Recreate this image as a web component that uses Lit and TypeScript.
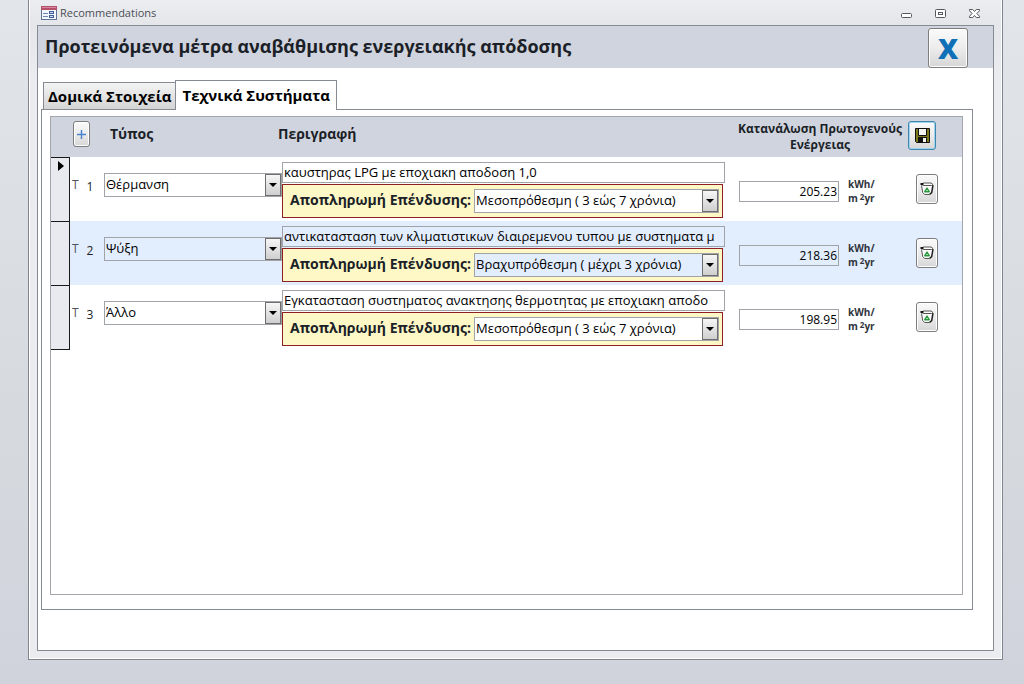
import { LitElement, html, css, svg } from "lit";
import { customElement, state } from "lit/decorators.js";
import { classMap } from "lit/directives/class-map.js";

interface Measure {
  id: number;
  type: string;
  description: string;
  payback: string;
  energy: string;
}

const TYPES = ["Θέρμανση", "Ψύξη", "Άλλο"];
const PAYBACKS = ["Βραχυπρόθεσμη ( μέχρι 3 χρόνια)", "Μεσοπρόθεσμη ( 3 εώς 7 χρόνια)"];

const MEASURES: Measure[] = [
  { id: 1, type: TYPES[0], description: "καυστηρας LPG με εποχιακη αποδοση 1,0", payback: PAYBACKS[1], energy: "205.23" },
  { id: 2, type: TYPES[1], description: "αντικατασταση των κλιματιστικων διαιρεμενου τυπου με συστηματα μ", payback: PAYBACKS[0], energy: "218.36" },
  { id: 3, type: TYPES[2], description: "Εγκατασταση συστηματος ανακτησης θερμοτητας με εποχιακη αποδο", payback: PAYBACKS[1], energy: "198.95" },
];

const formIcon = html`<svg width="16" height="16" viewBox="0 0 16 16" aria-hidden="true">
  <rect x="0.5" y="1.5" width="15" height="13" fill="#f4f7fb" stroke="#5f7394"/>
  <rect x="0" y="1" width="16" height="4" fill="#b5506a"/>
  <rect x="1" y="2" width="14" height="1" fill="#d58a9b"/>
  <path d="M2 8.500h5M2 11.500h5" stroke="#6d86b0"/>
  <rect x="8.5" y="6.5" width="4" height="2" fill="#cfdcf0" stroke="#3f5f94"/>
  <rect x="8.5" y="10.5" width="4" height="2" fill="#cfdcf0" stroke="#3f5f94"/>
</svg>`;

const minimizeIcon = svg`<rect x="1.5" y="6.5" width="10" height="4" rx="1" fill="#fff" stroke="#55585f"/>`;
const restoreIcon = svg`<rect x="1.5" y="2.5" width="10" height="8" rx="1" fill="#fff" stroke="#55585f"/>
  <rect x="4.5" y="5.5" width="4" height="2" fill="#fff" stroke="#55585f"/>`;
const closeIcon = svg`<path d="M1.500 2.500h3.200l1.800 2 1.800-2h3.200v1.200l-2.600 2.800 2.600 2.800v1.200H8.300l-1.800-2-1.800 2H1.500v-1.200l2.600-2.800-2.600-2.800z" fill="#fff" stroke="#55585f"/>`;

const saveIcon = html`<svg width="15" height="15" viewBox="0 0 15 15" aria-hidden="true">
  <path d="M0.500 0.500h14v14H1.500l-1-1z" fill="#7c781c" stroke="#111"/>
  <rect x="4" y="1" width="7" height="6" fill="#f4f4f0"/>
  <path d="M3.500 1v6.500h8V1" fill="none" stroke="#111"/>
  <rect x="3" y="9" width="9" height="6" fill="#111"/>
  <rect x="8" y="10" width="3" height="4" fill="#f4f4f0"/>
</svg>`;

const binIcon = html`<svg width="14" height="16" viewBox="0 0 14 16" aria-hidden="true">
  <path d="M1.500 4.500L2.700 11.500l2 2h4.800l1.700-1.500L13 4z" fill="#fafafa"/>
  <path d="M1.500 4.500L2.700 11.500l2 2h4.800" fill="none" stroke="#555"/>
  <path d="M13 4L11.700 11.500l-2.200 2" fill="none" stroke="#222" stroke-width="1.500"/>
  <path d="M1.500 3.500l2-1.500h7.500l2 1.500-1.500 1h-8z" fill="#fff" stroke="#555"/>
  <path d="M0.500 2h3v2h-3z" fill="#111"/>
  <path d="M7 7.200L9.200 10.700h-4.400z" fill="#eefaee" stroke="#27963a" stroke-width="1.400" stroke-linejoin="round"/>
</svg>`;

@customElement("drop-mark")
export class DropMark extends LitElement {
  static styles = css`
    :host {
      display: grid;
      place-items: center;
      box-sizing: border-box;
      border: 1px solid #6e6e6e;
      background: linear-gradient(#f6f6f6, #cfcfcf);
      pointer-events: none;
    }
  `;
  render() {
    return html`<svg width="8" height="4" viewBox="0 0 8 4" aria-hidden="true"><path d="M0 0h8L4 4z" fill="#000"/></svg>`;
  }
}

@customElement("app-root")
export class AppRoot extends LitElement {
  @state() private tab = 1;
  @state() private current = 1;

  static styles = css`
    :host {
      display: flex;
      flex-direction: column;
      box-sizing: border-box;
      min-height: 100vh;
      padding: 0 21px 24px 28px;
      background: linear-gradient(#e2e5ea, #d6dade 60%, #d0d3dc);
      font-family: "Open Sans", "Noto Sans", sans-serif;
      font-size: 12px;
      line-height: 16px;
      color: #1b1f27;
    }
    *, *::before { box-sizing: border-box; }
    button, input, select { font: inherit; color: inherit; margin: 0; }
    button { display: grid; place-items: center; padding: 0; cursor: pointer; }
    .window {
      flex: 1;
      display: flex;
      flex-direction: column;
      padding: 0 8px 8px;
      border: 1px solid #7f858e;
      border-top: 0;
      background: linear-gradient(#ebedf0, #e4e6ea 24px, #ebecf0 80px);
      box-shadow: inset -1px -1px #fff, inset 1px 0 #fff;
    }
    .titlebar {
      display: flex;
      align-items: center;
      height: 25px;
      padding: 1px 13px 0 4px;
      gap: 3px;
      font-size: 11px;
      color: #4a4e55;
    }
    .titlebar .name { flex: 1; }
    .sysbuttons { display: flex; gap: 21px; }
    .sysbuttons button { border: 0; background: none; }
    .form {
      flex: 1;
      display: flex;
      flex-direction: column;
      border: 1px solid #868b93;
      background: #fff;
    }
    .form-head {
      display: flex;
      justify-content: space-between;
      height: 42px;
      padding: 2px 25px 0 7px;
      background: #d0d4de;
    }
    h1 {
      margin: 0;
      font-size: 18px;
      line-height: 36px;
      font-weight: 700;
    }
    .raised {
      border: 1px solid #7d7d7d;
      border-radius: 3px;
      background: linear-gradient(#fafafa, #ececec 50%, #d6d6d6);
      box-shadow: inset 0 0 0 1px #fff;
    }
    .exit {
      width: 40px;
      height: 40px;
      font-size: 28px;
      line-height: 36px;
      font-weight: 800;
      color: #0f70b7;
    }
    .tabs {
      display: flex;
      align-items: flex-end;
      padding: 12px 5px 0;
    }
    .tabs button {
      height: 27px;
      padding: 0 4px;
      border: 1px solid #868b93;
      border-bottom: 0;
      background: linear-gradient(#f4f4f4, #d4d4d4);
      font-size: 15px;
      line-height: 20px;
      font-weight: 700;
      color: #000;
    }
    .tabs button.on {
      z-index: 1;
      height: 30px;
      padding: 0 6px 2px;
      margin: 0 0 -1px -1px;
      background: #fff;
    }
    .page {
      flex: 1;
      display: flex;
      margin: 0 20px 40px 3px;
      padding: 6px 9px 14px 8px;
      border: 1px solid #868b93;
    }
    .sheet {
      flex: 1;
      min-width: 0;
      border: 1px solid #a3a6ab;
    }
    table, thead, tbody { display: block; }
    th, td { padding: 0; text-align: left; font-weight: 400; }
    thead tr {
      display: grid;
      grid-template-columns: 59px 168px minmax(0, 1fr) 170px 57px;
      height: 40px;
      background: #d0d4de;
    }
    thead th { font-size: 14px; line-height: 34px; font-weight: 700; }
    thead th.energy { font-size: 12px; line-height: 16px; padding-top: 4px; text-align: center; }
    .add {
      width: 17px;
      height: 26px;
      margin: 4px 0 0 22px;
      color: #4a86cf;
    }
    .save {
      width: 28px;
      height: 29px;
      margin: 4px 0 0 3px;
      border-color: #3f86ad;
      box-shadow: inset 0 0 0 1px #9fd4ee;
    }
    tbody tr {
      display: grid;
      grid-template-columns: 19px 34px 178px minmax(0, 1fr) 237px;
      height: 64px;
    }
    tbody tr.alt { background: #e2edfd; }
    .selector {
      width: 100%;
      height: 65px;
      padding: 3px 0 0 7px;
      place-items: start;
      border: 1px solid #1a1a1a;
      border-left: 0;
      background: #e9eaef;
    }
    .selector svg { display: block; }
    .key {
      display: flex;
      align-items: flex-start;
      gap: 8px;
      padding: 20px 0 0 2px;
    }
    .key span:first-child { color: #50545c; }
    .key span:last-child { padding-top: 2px; }
    .combo {
      display: grid;
      grid-template-columns: minmax(0, 1fr) 17px;
      font-size: 13px;
    }
    .combo select {
      grid-area: 1 / 1 / 2 / 3;
      width: 100%;
      padding: 0 18px 2px 1px;
      border: 1px solid #a0a3a8;
      border-radius: 0;
      background: transparent;
      appearance: none;
      color: #000;
    }
    .combo drop-mark { grid-area: 1 / 2; margin: 1px 1px 1px 0; }
    .type { padding-top: 16px; }
    .type select { height: 24px; }
    .desc { display: flex; flex-direction: column; gap: 1px; padding-top: 5px; }
    input {
      border: 1px solid #a0a3a8;
      border-radius: 0;
      background: transparent;
      color: #000;
    }
    .desc input { width: 100%; height: 21px; padding: 0 4px 2px 1px; font-size: 13px; }
    .payback {
      display: grid;
      grid-template-columns: 184px minmax(0, 1fr);
      height: 34px;
      margin: 0 2px 0 0;
      padding: 4px 3px 4px 7px;
      border: 1px solid #8e1f24;
      background: #fdf8c6;
    }
    .payback label { font-size: 14px; line-height: 22px; font-weight: 700; }
    .payback .combo { background: #fff; }
    .alt .payback .combo { background: #e2edfd; }
    .usage {
      display: grid;
      grid-template-columns: 100px 68px 22px;
      column-gap: 9px;
      align-items: start;
      padding: 17px 0 0 14px;
    }
    .usage input { width: 100px; height: 21px; margin-top: 7px; padding: 0 1px; text-align: right; }
    .unit { padding-top: 3px; font-size: 10px; line-height: 14px; font-weight: 700; color: #30343c; }
    sup { padding-left: 2px; font-size: 8px; line-height: 8px; vertical-align: 2px; }
    .bin { width: 22px; height: 30px; margin-left: -9px; }
  `;

  private row(m: Measure) {
    const mark = m.id === this.current;
    return html`<tr class=${classMap({ alt: m.id % 2 === 0 })} @click=${() => (this.current = m.id)}>
      <td>
        <button class="selector" aria-label="Εγγραφή ${m.id}">
          ${mark ? html`<svg width="6" height="10" viewBox="0 0 6 10" aria-hidden="true"><path d="M0 0l6 5-6 5z"/></svg>` : ""}
        </button>
      </td>
      <td class="key"><span>T</span><span>${m.id}</span></td>
      <td class="type">
        <div class="combo">
          <select aria-label="Τύπος">${TYPES.map((t) => html`<option ?selected=${t === m.type}>${t}</option>`)}</select>
          <drop-mark></drop-mark>
        </div>
      </td>
      <td class="desc">
        <input type="text" aria-label="Περιγραφή" .value=${m.description} />
        <div class="payback">
          <label for="payback-${m.id}">Αποπληρωμή Επένδυσης:</label>
          <div class="combo">
            <select id="payback-${m.id}">${PAYBACKS.map((p) => html`<option ?selected=${p === m.payback}>${p}</option>`)}</select>
            <drop-mark></drop-mark>
          </div>
        </div>
      </td>
      <td class="usage">
        <input type="text" aria-label="Κατανάλωση Πρωτογενούς Ενέργειας" .value=${m.energy} />
        <span class="unit">kWh/<br />m<sup>2</sup>yr</span>
        <button class="bin raised" aria-label="Διαγραφή">${binIcon}</button>
      </td>
    </tr>`;
  }

  render() {
    const sys = [
      ["Minimize", minimizeIcon],
      ["Restore", restoreIcon],
      ["Close", closeIcon],
    ] as const;
    return html`
      <div class="window">
        <div class="titlebar">
          ${formIcon}<span class="name">Recommendations</span>
          <div class="sysbuttons">
            ${sys.map(([label, icon]) => html`<button aria-label=${label}><svg width="13" height="13" viewBox="0 0 13 13">${icon}</svg></button>`)}
          </div>
        </div>
        <main class="form">
          <header class="form-head">
            <h1>Προτεινόμενα μέτρα αναβάθμισης ενεργειακής απόδοσης</h1>
            <button class="exit raised">X</button>
          </header>
          <div class="tabs" role="tablist">
            ${["Δομικά Στοιχεία", "Τεχνικά Συστήματα"].map(
              (name, i) => html`<button role="tab" aria-selected=${this.tab === i} class=${classMap({ on: this.tab === i })} @click=${() => (this.tab = i)}>${name}</button>`
            )}
          </div>
          <section class="page" role="tabpanel">
            <div class="sheet">
              <table>
                <thead>
                  <tr>
                    <th><button class="add raised" aria-label="Προσθήκη"><svg width="9" height="9" viewBox="0 0 9 9"><path d="M4.500 0v9M0 4.500h9" stroke="currentColor" stroke-width="1.500"/></svg></button></th>
                    <th>Τύπος</th>
                    <th>Περιγραφή</th>
                    <th class="energy">Κατανάλωση Πρωτογενούς Ενέργειας</th>
                    <th><button class="save raised" aria-label="Αποθήκευση">${saveIcon}</button></th>
                  </tr>
                </thead>
                <tbody>${MEASURES.map((m) => this.row(m))}</tbody>
              </table>
            </div>
          </section>
        </main>
      </div>
    `;
  }
}
